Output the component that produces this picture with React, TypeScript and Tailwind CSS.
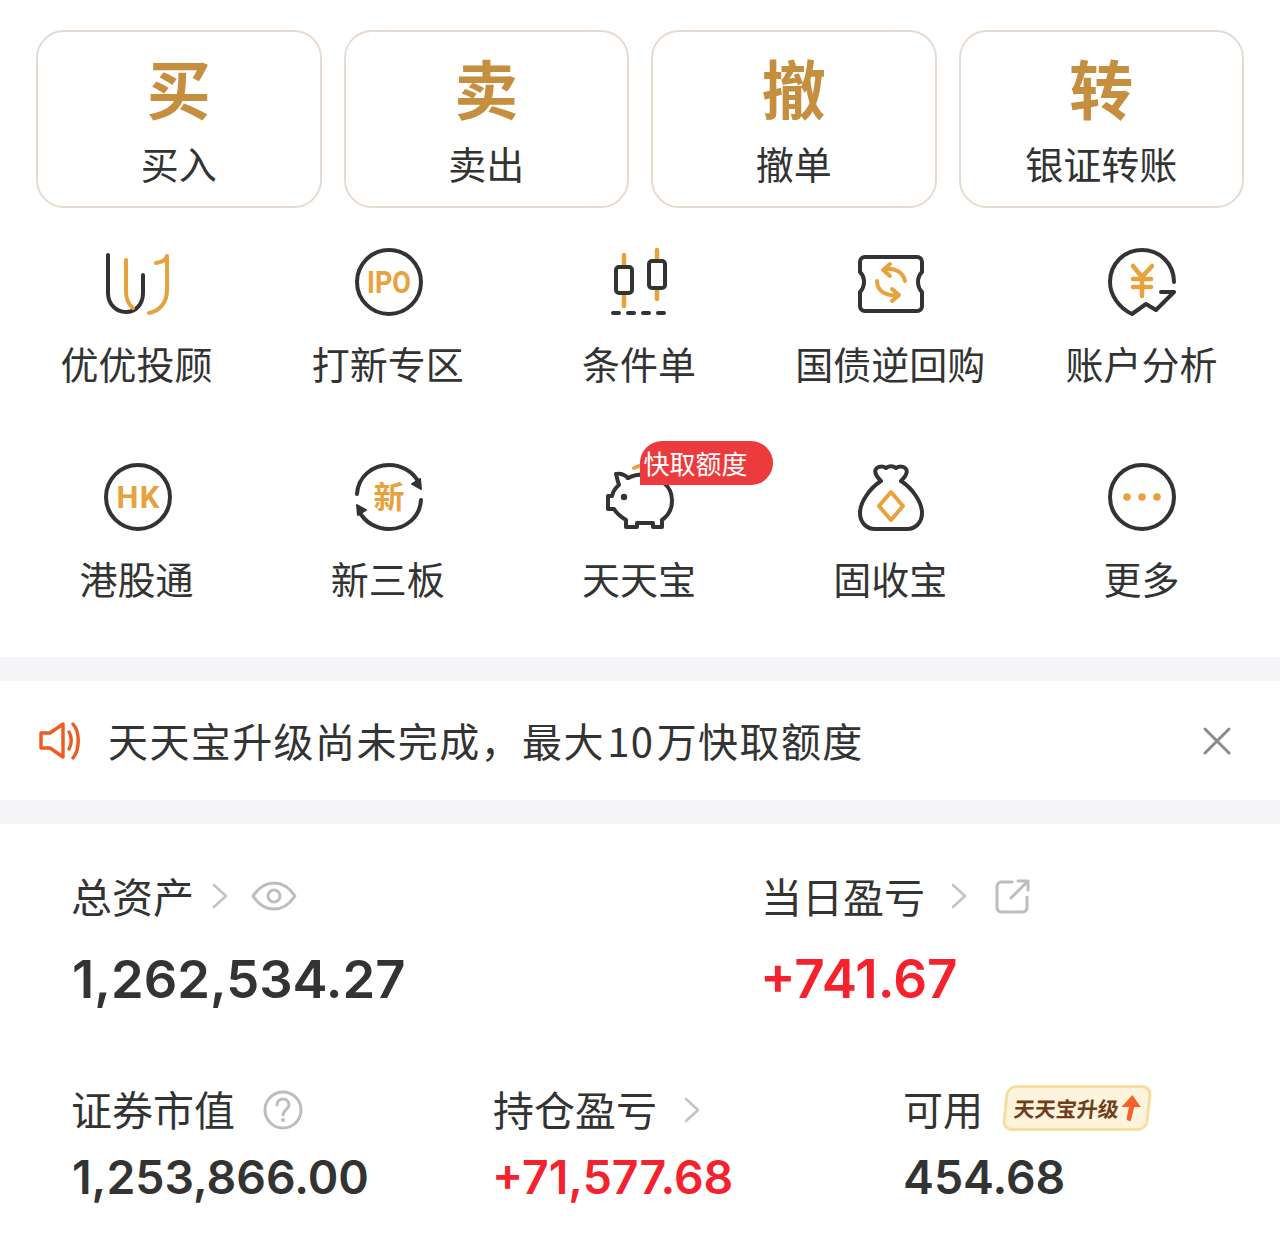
import React from 'react';

const cjk = "font-['Noto_Sans_CJK_SC',sans-serif]";
const dark = '#333333';
const gold = '#E8A23C';

const IconBox: React.FC<{ children: React.ReactNode }> = ({ children }) => (
  <svg width="68" height="68" viewBox="0 0 68 68" fill="none" strokeLinecap="round" strokeLinejoin="round">
    {children}
  </svg>
);

const UuIcon = () => (
  <IconBox>
    <path d="M4 7V45C4 56 12 64 22 64C32 64 39 56 39 45V27" stroke={dark} strokeWidth="4" />
    <path d="M22 12V43C22 50 24 56 29 60" stroke={gold} strokeWidth="4" />
    <path d="M52 15C58 14 62 12 63 8V42C63 54 56 63 45 65" stroke={gold} strokeWidth="4" />
  </IconBox>
);

const IpoIcon = () => (
  <IconBox>
    <circle cx="34" cy="34" r="32" stroke={dark} strokeWidth="4" />
    <text x="34" y="45" textAnchor="middle" fontFamily="Roboto, sans-serif" fontWeight="700" fontSize="31" fill={gold} textLength="44" lengthAdjust="spacingAndGlyphs">IPO</text>
  </IconBox>
);

const CandleIcon = () => (
  <IconBox>
    <path d="M18 7V58M51 2V51" stroke={gold} strokeWidth="4.5" />
    <rect x="10" y="19" width="16" height="26" rx="3" stroke={dark} strokeWidth="4" fill="white" />
    <rect x="43" y="13" width="16" height="27" rx="3" stroke={dark} strokeWidth="4" fill="white" />
    <path d="M7 65H13M22 65H28M37 65H43M52 65H58" stroke={dark} strokeWidth="4" />
  </IconBox>
);

const RepoIcon = () => (
  <IconBox>
    <path d="M8 9H60C63 9 65 11 65 14V24C62 27 61 30 61 34C61 38 62 41 65 44V58C65 61 63 63 60 63H8C5 63 3 61 3 58V44C6 41 7 38 7 34C7 30 6 27 3 24V14C3 11 5 9 8 9Z" stroke={dark} strokeWidth="4" />
    <path d="M28 22C37 19 46 24 48 33" stroke={gold} strokeWidth="4" />
    <path d="M33 16L26 22L33 28" stroke={gold} strokeWidth="4" />
    <path d="M20 33C20 43 29 48 39 47" stroke={gold} strokeWidth="4" />
    <path d="M35 41L42 47L35 53" stroke={gold} strokeWidth="4" />
  </IconBox>
);

const AnalysisIcon = () => (
  <IconBox>
    <path d="M66 34C66 16 52 2 34 2C16 2 2 16 2 34C2 47 11 60 24 66L38 56L48 62L66 44H53" stroke={dark} strokeWidth="4" />
    <path d="M25 18L34 29L44 18M25 31H43M25 39H43M34 29V48" stroke={gold} strokeWidth="4.5" />
  </IconBox>
);

const HkIcon = () => (
  <IconBox>
    <circle cx="34" cy="34" r="32" stroke={dark} strokeWidth="4" />
    <text x="34" y="45" textAnchor="middle" fontFamily="Roboto, sans-serif" fontWeight="700" fontSize="31" fill={gold} textLength="43">HK</text>
  </IconBox>
);

const NewIcon = () => (
  <IconBox>
    <path d="M2 31C3 14 17 2 34 2C46 2 58 8 64 20" stroke={dark} strokeWidth="4" />
    <path d="M66 37C65 54 51 66 34 66C22 66 10 60 4 48" stroke={dark} strokeWidth="4" />
    <path d="M66 26L65 16L57 21Z" fill={dark} stroke={dark} strokeWidth="2" />
    <path d="M2 42L3 52L11 47Z" fill={dark} stroke={dark} strokeWidth="2" />
    <text x="34" y="45" textAnchor="middle" fontFamily="'Noto Sans CJK SC', sans-serif" fontWeight="700" fontSize="31" fill={gold}>新</text>
  </IconBox>
);

const PigIcon = () => (
  <IconBox>
    <path d="M28 5L33 3" stroke={gold} strokeWidth="4" />
    <path d="M22 15C18 11 14 10 10 11C11 15 12 19 13 22C9 25 7 29 6 33H2V46H8C11 51 15 54 20 57V64H31V60H47V64H56V57C63 52 66 45 66 38C66 30 63 24 58 20" stroke={dark} strokeWidth="4" />
    <path d="M22 15C28 12 36 11 42 12" stroke={dark} strokeWidth="4" />
    <circle cx="18" cy="34" r="3.2" fill={dark} />
  </IconBox>
);

const BagIcon = () => (
  <IconBox>
    <path d="M24 18C19 13 17 9 19 6C21 3 26 3 29 5C32 3 36 3 39 5C42 3 47 3 49 6C51 9 49 13 44 18C55 25 65 39 65 50C65 60 58 66 50 66H18C10 66 3 60 3 50C3 39 13 25 24 18Z" stroke={dark} strokeWidth="4" />
    <path d="M34 29L46 43L34 57L22 43Z" stroke={gold} strokeWidth="4" />
  </IconBox>
);

const MoreIcon = () => (
  <IconBox>
    <circle cx="34" cy="34" r="32" stroke={dark} strokeWidth="4" />
    <circle cx="19" cy="34" r="3.8" fill={gold} />
    <circle cx="34" cy="34" r="3.8" fill={gold} />
    <circle cx="49" cy="34" r="3.8" fill={gold} />
  </IconBox>
);

const Chevron = ({ className = '' }: { className?: string }) => (
  <svg width="16" height="26" viewBox="0 0 16 26" fill="none" className={className}>
    <path d="M2 2L14 13L2 24" stroke="#c4c4c4" strokeWidth="2.6" strokeLinecap="round" strokeLinejoin="round" />
  </svg>
);

const actions = [
  { big: '买', label: '买入' },
  { big: '卖', label: '卖出' },
  { big: '撤', label: '撤单' },
  { big: '转', label: '银证转账' },
];

const tools = [
  { icon: <UuIcon />, label: '优优投顾' },
  { icon: <IpoIcon />, label: '打新专区' },
  { icon: <CandleIcon />, label: '条件单' },
  { icon: <RepoIcon />, label: '国债逆回购' },
  { icon: <AnalysisIcon />, label: '账户分析' },
  { icon: <HkIcon />, label: '港股通' },
  { icon: <NewIcon />, label: '新三板' },
  { icon: <PigIcon />, label: '天天宝', badge: '快取额度' },
  { icon: <BagIcon />, label: '固收宝' },
  { icon: <MoreIcon />, label: '更多' },
];

const numFont = "font-['Inter',sans-serif]";

export default function App() {
  return (
    <div className={`w-[1280px] h-[1245px] bg-white overflow-hidden ${cjk}`}>
      <div className="grid grid-cols-4 gap-[22px] px-[36px] pt-[30px]">
        {actions.map((a) => (
          <div key={a.big} className="h-[178px] rounded-[28px] border-2 border-[#e7dbd1] flex flex-col items-center pt-[14px]">
            <div className="text-[64px] leading-[80px] font-bold text-[#C58F3F]">{a.big}</div>
            <div className="mt-[12px] text-[38px] leading-[50px] text-[#333]">{a.label}</div>
          </div>
        ))}
      </div>

      <div className="grid grid-cols-5 px-[12px] pt-[40px] h-[449px] content-start">
        {tools.map((t) => (
          <div key={t.label} className="h-[215px] flex flex-col items-center relative">
            <div className="w-[68px] h-[68px]">{t.icon}</div>
            <div className="mt-[20px] -ml-[2px] text-[38px] leading-[54px] text-[#333] whitespace-nowrap">{t.label}</div>
            {t.badge && (
              <div className="absolute left-[126px] top-[-22px] w-[133px] h-[44px] bg-[#EC3A3D] rounded-tl-[22px] rounded-r-[22px] text-white text-[26px] leading-[44px] pl-[3px] whitespace-nowrap">
                {t.badge}
              </div>
            )}
          </div>
        ))}
      </div>

      <div className="h-[24px] bg-[#f5f5f7]" />

      <div className="h-[119px] flex items-center pl-[39px] pr-[48px]">
        <svg width="44" height="38" viewBox="0 0 44 38" fill="none" className="shrink-0">
          <path d="M2 11H11L24 2V35L11 26H2Z" stroke="#EE5A1F" strokeWidth="3.4" strokeLinejoin="round" />
          <path d="M30 10C33 15 33 22 30 27" stroke="#EE5A1F" strokeWidth="3.4" strokeLinecap="round" />
          <path d="M34 2C41 10 41 27 34 36" stroke="#EE5A1F" strokeWidth="3.4" strokeLinecap="round" />
        </svg>
        <div className="ml-[25px] pb-[2px] flex-1 text-[40px] leading-[50px] tracking-[1.4px] [word-spacing:-8px] text-[#333] whitespace-nowrap">
          天天宝升级尚未完成，最大 10 万快取额度
        </div>
        <svg width="30" height="30" viewBox="0 0 30 30" fill="none" className="shrink-0">
          <path d="M3 3L27 27M27 3L3 27" stroke="#8a8a8a" strokeWidth="3" strokeLinecap="round" />
        </svg>
      </div>

      <div className="h-[24px] bg-[#f5f5f7]" />

      <div className="grid grid-cols-[690px_1fr] pl-[71px] pt-[44px]">
        <div>
          <div className="flex items-center h-[54px]">
            <span className="text-[41px] leading-[54px] text-[#333]">总资产</span>
            <Chevron className="ml-[18px] mt-[2px]" />
            <svg width="46" height="32" viewBox="0 0 46 32" fill="none" className="ml-[23px] mt-[2px]">
              <path d="M2 16C8 7 15 3 23 3C31 3 38 7 44 16C38 25 31 29 23 29C15 29 8 25 2 16Z" stroke="#bdbdbd" strokeWidth="3" strokeLinejoin="round" />
              <circle cx="23" cy="16" r="6" stroke="#bdbdbd" strokeWidth="3" />
            </svg>
          </div>
          <div className={`${numFont} mt-[19px] ml-[1px] text-[52.5px] leading-[76px] font-semibold text-[#333]`}>1,262,534.27</div>
        </div>
        <div>
          <div className="flex items-center h-[54px]">
            <span className="text-[41px] leading-[54px] text-[#333]">当日盈亏</span>
            <Chevron className="ml-[26px] mt-[2px]" />
            <svg width="36" height="36" viewBox="0 0 36 36" fill="none" className="ml-[28px] mt-[2px]">
              <path d="M17 4H6C4 4 2 6 2 8V30C2 32 4 34 6 34H28C30 34 32 32 32 30V19" stroke="#bdbdbd" strokeWidth="3" strokeLinecap="round" />
              <path d="M16 20L33 3M23 3H33V12" stroke="#bdbdbd" strokeWidth="3" strokeLinecap="round" strokeLinejoin="round" />
            </svg>
          </div>
          <div className={`${numFont} mt-[19px] -ml-[1px] text-[53px] leading-[76px] font-semibold text-[#F5222D]`}>+741.67</div>
        </div>
      </div>

      <div className="grid grid-cols-[422px_410px_1fr] pl-[71px] pt-[64px]">
        <div>
          <div className="flex items-center h-[54px]">
            <span className="text-[41px] leading-[54px] text-[#333]">证券市值</span>
            <svg width="40" height="40" viewBox="0 0 40 40" fill="none" className="ml-[28px] mt-[3px]">
              <circle cx="20" cy="20" r="18" stroke="#bdbdbd" strokeWidth="3" />
              <path d="M14 15C14 11 17 9 20 9C24 9 26 12 26 15C26 19 20 20 20 25" stroke="#bdbdbd" strokeWidth="3" strokeLinecap="round" />
              <circle cx="20" cy="30" r="2" fill="#bdbdbd" />
            </svg>
          </div>
          <div className={`${numFont} mt-[12px] ml-[1px] text-[46.4px] leading-[60px] font-semibold text-[#333]`}>1,253,866.00</div>
        </div>
        <div>
          <div className="flex items-center h-[54px]">
            <span className="text-[41px] leading-[54px] text-[#333]">持仓盈亏</span>
            <Chevron className="ml-[27px] mt-[3px]" />
          </div>
          <div className={`${numFont} mt-[12px] -ml-[1px] text-[46.4px] leading-[60px] font-semibold text-[#F5222D]`}>+71,577.68</div>
        </div>
        <div>
          <div className="flex items-center h-[54px]">
            <span className="text-[40px] leading-[54px] text-[#333]">可用</span>
            <div className="ml-[21px] w-[146px] h-[46px] rounded-[10px] border-[3px] border-[#F7DE9F] bg-[#FEF3DC] -skew-x-6 flex items-center pl-[7px] whitespace-nowrap">
              <span className="text-[21px] leading-[28px] font-bold text-[#6E3F1D]">天天宝升级</span>
              <svg width="20" height="28" viewBox="0 0 18 26" fill="none" className="ml-[2px]">
                <path d="M9 1L18 12H12L10 25C7 25 6 24 6 22L7 12H0Z" fill="#F4622A" />
              </svg>
            </div>
          </div>
          <div className={`${numFont} mt-[12px] text-[46.4px] leading-[60px] font-semibold text-[#333]`}>454.68</div>
        </div>
      </div>
    </div>
  );
}
